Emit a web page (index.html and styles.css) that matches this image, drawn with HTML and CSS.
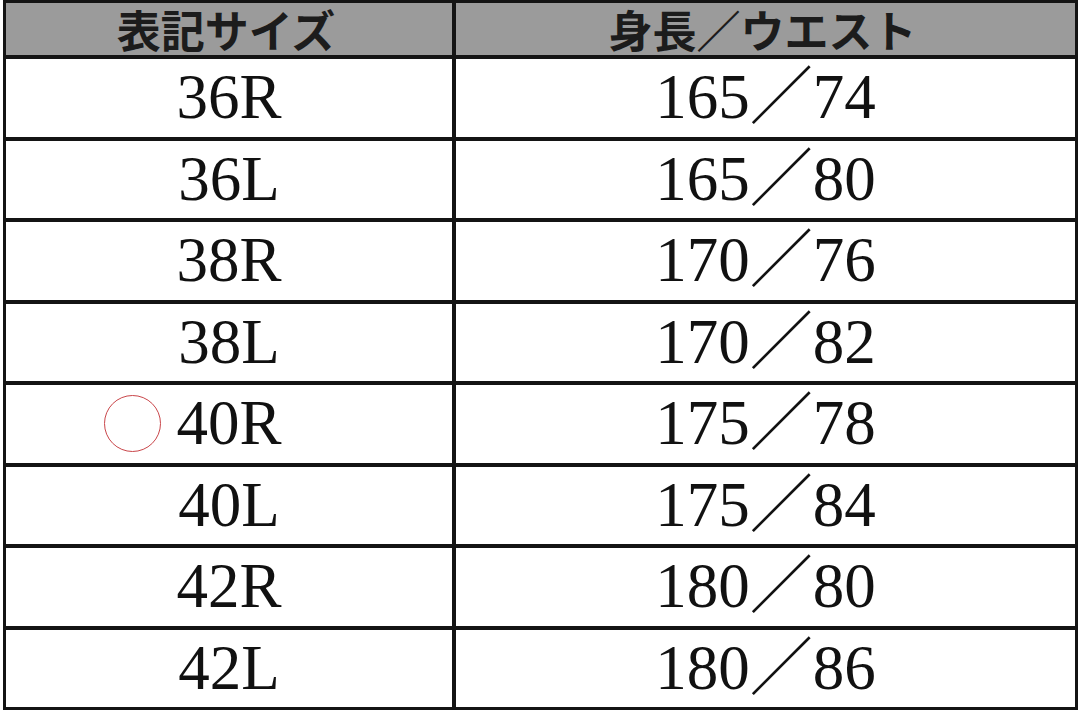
FILE: index.html
```html
<!DOCTYPE html>
<html lang="ja">
<head>
<meta charset="utf-8">
<title>サイズ表</title>
<link rel="stylesheet" href="styles.css">
</head>
<body>
<div class="size-table">
  <div class="cell head">表記サイズ</div>
  <div class="cell head">身長／ウエスト</div>
  <div class="cell">36R</div><div class="cell">165／74</div>
  <div class="cell">36L</div><div class="cell">165／80</div>
  <div class="cell">38R</div><div class="cell">170／76</div>
  <div class="cell">38L</div><div class="cell">170／82</div>
  <div class="cell marked"><span class="circle"></span>40R</div><div class="cell">175／78</div>
  <div class="cell">40L</div><div class="cell">175／84</div>
  <div class="cell">42R</div><div class="cell">180／80</div>
  <div class="cell">42L</div><div class="cell">180／86</div>
</div>
</body>
</html>
```
FILE: styles.css
```css
html, body {
  margin: 0;
  padding: 0;
  background: #ffffff;
}
body {
  width: 1080px;
  height: 710px;
  overflow: hidden;
}
.size-table {
  margin-left: 3px;
  width: 1075px;
  height: 710px;
  box-sizing: border-box;
  padding: 3px;
  background: #141414;
  display: grid;
  grid-template-columns: 446px 1fr;
  grid-template-rows: 52px repeat(8, 77.5px);
  gap: 4px;
}
.cell {
  background: #ffffff;
  display: flex;
  align-items: center;
  justify-content: center;
  font-family: "Liberation Serif", "Noto Sans CJK JP", serif;
  font-size: 63px;
  line-height: 1;
  color: #111111;
  position: relative;
  white-space: nowrap;
  min-height: 0;
}
.head {
  background: #9b9b9b;
  font-family: "Noto Sans CJK JP", sans-serif;
  font-weight: 700;
  font-size: 44px;
  line-height: 48px;
  color: #1c1c1c;
  padding-right: 6px;
}
.circle {
  position: absolute;
  left: 98px;
  top: 50%;
  margin-top: -29px;
  width: 55px;
  height: 55px;
  border: 1.5px solid #c9464a;
  border-radius: 50%;
}
```
